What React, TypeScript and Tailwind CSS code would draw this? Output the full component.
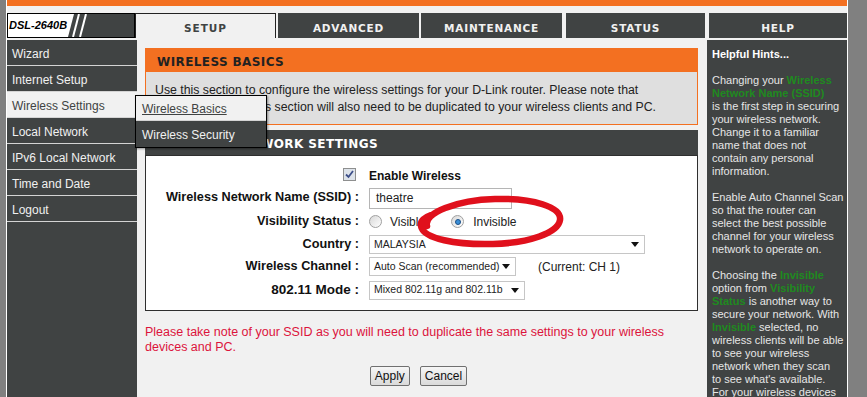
import type { ReactNode } from 'react'

const navItems = ['Wizard', 'Internet Setup', 'Wireless Settings', 'Local Network', 'IPv6 Local Network', 'Time and Date', 'Logout']

const tabs = [
    { label: 'ADVANCED', className: 'ml-[2px] w-[141px]' },
    { label: 'MAINTENANCE', className: 'ml-[2px] w-[141px]' },
    { label: 'STATUS', className: 'ml-[4px] w-[139px]' },
    { label: 'HELP', className: 'ml-[4px] flex-1' },
]

function G({ children }: { children: ReactNode }) {
    return <span className="font-bold text-[#1f8a1f]">{children}</span>
}

function Arrow() {
    return (
        <svg width="8" height="5" viewBox="0 0 8 5" className="shrink-0">
            <path d="M0 0 L8 0 L4 5 Z" fill="#111" />
        </svg>
    )
}

function Select({ value, className }: { value: string; className: string }) {
    return (
        <div className={`flex items-center justify-between border border-[#c6c6c6] bg-white pl-[4px] pr-[5px] text-[10.5px] text-[#222] ${className}`}>
            <span className="whitespace-nowrap">{value}</span>
            <Arrow />
        </div>
    )
}

function Radio({ checked }: { checked?: boolean }) {
    return (
        <span className="flex h-[13px] w-[13px] shrink-0 items-center justify-center rounded-full border border-[#a0a0a0] bg-gradient-to-br from-[#d8d8d8] to-white">
            {checked && <span className="h-[6px] w-[6px] rounded-full border border-[#1b4f86] bg-[#3a8fd8]" />}
        </span>
    )
}

function Row({ label, h, children, labelClass = 'text-[12.7px]' }: { label: ReactNode; h: string; children: ReactNode; labelClass?: string }) {
    return (
        <div className={`flex items-center ${h}`}>
            <div className={`w-[213px] shrink-0 whitespace-nowrap text-right font-bold text-[#111] ${labelClass}`}>{label}</div>
            <div className="ml-[10px] flex items-center">{children}</div>
        </div>
    )
}

export default function App() {
    return (
        <div className="flex h-[397px] w-[867px] overflow-hidden bg-[#808080] [font-family:'Liberation_Sans',Arial,sans-serif]">
            <div className="w-[6px] shrink-0" />
            <div className="flex w-[842px] shrink-0 flex-col border-x border-white bg-[#f1f1f1]">
                <div className="h-[6px] shrink-0 bg-[#f37021]" />

                {/* Tabs */}
                <div className="mt-[7px] flex h-[25px] shrink-0">
                    <div className="flex w-[128px] items-center justify-between border border-black bg-white pl-[1px]">
                        <span className="text-[11px] font-bold italic text-black">DSL-2640B</span>
                        <svg width="66" height="23" viewBox="0 0 66 23">
                            <path d="M6 0 H66 V23 H0 Z" fill="#404343" />
                            <path d="M5 23 L11 0" stroke="#fff" strokeWidth="2" />
                            <path d="M12 23 L18 0" stroke="#fff" strokeWidth="2" />
                        </svg>
                    </div>
                    <div className="flex w-[141px] items-start justify-center border-x border-t border-[#222] bg-[#f1f1f1] pt-[8px] text-[10.5px] leading-[12px] font-bold tracking-[1px] text-[#404343] [font-family:'DejaVu_Sans',sans-serif]">
                        SETUP
                    </div>
                    {tabs.map((t) => (
                        <div key={t.label} className={`flex items-start justify-center bg-[#404343] pt-[9px] text-[10.5px] leading-[12px] font-bold tracking-[0.8px] text-[#f1f1f1] [font-family:'DejaVu_Sans',sans-serif] ${t.className}`}>
                            {t.label}
                        </div>
                    ))}
                </div>

                <div className="mt-[2px] flex min-h-0 flex-1 overflow-hidden">
                    {/* Left nav */}
                    <div className="w-[130px] shrink-0 bg-[#404343]">
                        {navItems.map((item) => {
                            const active = item === 'Wireless Settings'
                            return (
                                <div
                                    key={item}
                                    className={`relative flex h-[26px] items-center border-b border-[#d4d4d4] pl-[5px] pt-[2px] text-[12px] ${active ? 'bg-[#f1f1f1] text-[#404343]' : 'text-[#f1f1f1]'}`}
                                >
                                    {item}
                                    {active && (
                                        <div className="absolute left-[128px] top-[3px] z-10 w-[132px] border border-black text-[12px] shadow-[1px_1px_2px_rgba(0,0,0,0.4)]">
                                            <div className="flex h-[25px] items-center border-b border-[#d4d4d4] bg-[#f1f1f1] pl-[6px] pt-[1px] text-[#404343] underline">
                                                Wireless Basics
                                            </div>
                                            <div className="flex h-[26px] items-center bg-[#404343] pl-[6px] pt-[1px] text-[#f1f1f1]">
                                                Wireless Security
                                            </div>
                                        </div>
                                    )}
                                </div>
                            )
                        })}
                    </div>

                    {/* Main */}
                    <div className="w-[570px] shrink-0 pl-[8px] pr-[9px] pt-[8px]">
                        <div className="border-x border-b border-[#f37021]">
                            <div className="flex h-[24px] items-center bg-[#f37021] pl-[11px] pt-[3px] text-[12px] font-bold tracking-[0.4px] text-[#222] [font-family:'DejaVu_Sans',sans-serif]">
                                WIRELESS BASICS
                            </div>
                            <div className="h-[52px] whitespace-nowrap bg-[#dfdfdf] pl-[9px] pt-[10px] text-[12.3px] leading-[17px] text-[#222]">
                                Use this section to configure the wireless settings for your D-Link router. Please note that
                                <br />
                                changes made in this section will also need to be duplicated to your wireless clients and PC.
                            </div>
                        </div>

                        <div className="mt-[5px]">
                            <div className="flex h-[25px] items-center bg-[#404343] pl-[12px] pt-[3px] text-[12px] font-bold tracking-[0.4px] text-white [font-family:'DejaVu_Sans',sans-serif]">
                                WIRELESS NETWORK SETTINGS
                            </div>
                            <div className="relative h-[156px] border border-[#2f2f2f] bg-white pt-[9px]">
                                <Row label={<span className="inline-flex items-center justify-end"><span className="mr-[3px] flex h-[13px] w-[13px] items-center justify-center border border-[#8e8f8f] bg-[#dde3ea]">
                                    <svg width="9" height="9" viewBox="0 0 9 9"><path d="M1 4.5 L3.5 7 L8 1" stroke="#3d4f8a" strokeWidth="1.8" fill="none" /></svg>
                                </span></span>} h="h-[22px]">
                                    <span className="text-[12px] font-bold text-[#111]">Enable Wireless</span>
                                </Row>
                                <Row label="Wireless Network Name (SSID) :" h="h-[22px]">
                                    <div className="flex h-[21px] w-[143px] items-center border border-[#b5b5b5] pl-[6px] text-[12px] text-[#222]">theatre</div>
                                </Row>
                                <Row label="Visibility Status :" h="h-[25px]">
                                    <Radio />
                                    <span className="ml-[8px] text-[12px] text-[#222]">Visible</span>
                                    <span className="ml-[26px]"><Radio checked /></span>
                                    <span className="ml-[9px] text-[12px] text-[#222]">Invisible</span>
                                </Row>
                                <Row label="Country :" h="h-[21px]">
                                    <Select value="MALAYSIA" className="h-[19px] w-[276px]" />
                                </Row>
                                <Row label="Wireless Channel :" h="h-[23px]">
                                    <Select value="Auto Scan (recommended)" className="h-[19px] w-[147px]" />
                                    <span className="ml-[22px] text-[12px] text-[#222]">(Current: CH 1)</span>
                                </Row>
                                <Row label="802.11 Mode :" h="h-[24px]" labelClass="text-[13.5px]">
                                    <Select value="Mixed 802.11g and 802.11b" className="h-[19px] w-[156px]" />
                                </Row>

                                {/* hand-drawn annotation */}
                                <svg className="absolute left-[271px] top-[37px]" width="150" height="58" viewBox="0 0 150 58">
                                    <path
                                        d="M10 33 C6 20 40 7 78 6 C116 5 145 14 143 27 C141 40 112 50 76 51 C40 52 6 46 4 33 C3 28 8 24 14 22"
                                        stroke="#e0101c"
                                        strokeWidth="6.5"
                                        fill="none"
                                        strokeLinecap="round"
                                    />
                                </svg>
                            </div>
                        </div>

                        <p className="mt-[14px] whitespace-nowrap text-[12.5px] leading-[15px] text-[#dc143c]">
                            Please take note of your SSID as you will need to duplicate the same settings to your wireless
                            <br />
                            devices and PC.
                        </p>

                        <div className="mt-[11px] flex justify-center gap-[10px] pr-[6px]">
                            <button className="h-[20px] rounded-[2px] border border-[#707070] bg-gradient-to-b from-[#f6f6f6] to-[#dadada] px-[4px] text-[12px] text-[#111]">Apply</button>
                            <button className="h-[20px] rounded-[2px] border border-[#707070] bg-gradient-to-b from-[#f6f6f6] to-[#dadada] px-[4px] text-[12px] text-[#111]">Cancel</button>
                        </div>
                    </div>

                    {/* Hints */}
                    <div className="flex-1 overflow-hidden whitespace-nowrap bg-[#404343] pl-[5px] pt-[8px] text-[11px] leading-[13px] text-[#e6e6e6]">
                        <div className="font-bold text-white">Helpful Hints...</div>
                        <div className="mt-[13px]">
                            Changing your <G>Wireless</G><br />
                            <G>Network Name (SSID)</G><br />
                            is the first step in securing<br />
                            your wireless network.<br />
                            Change it to a familiar<br />
                            name that does not<br />
                            contain any personal<br />
                            information.
                        </div>
                        <div className="mt-[13px]">
                            Enable Auto Channel Scan<br />
                            so that the router can<br />
                            select the best possible<br />
                            channel for your wireless<br />
                            network to operate on.
                        </div>
                        <div className="mt-[13px]">
                            Choosing the <G>Invisible</G><br />
                            option from <G>Visibility</G><br />
                            <G>Status</G> is another way to<br />
                            secure your network. With<br />
                            <G>Invisible</G> selected, no<br />
                            wireless clients will be able<br />
                            to see your wireless<br />
                            network when they scan<br />
                            to see what's available.<br />
                            For your wireless devices
                        </div>
                    </div>
                </div>
            </div>
        </div>
    )
}
